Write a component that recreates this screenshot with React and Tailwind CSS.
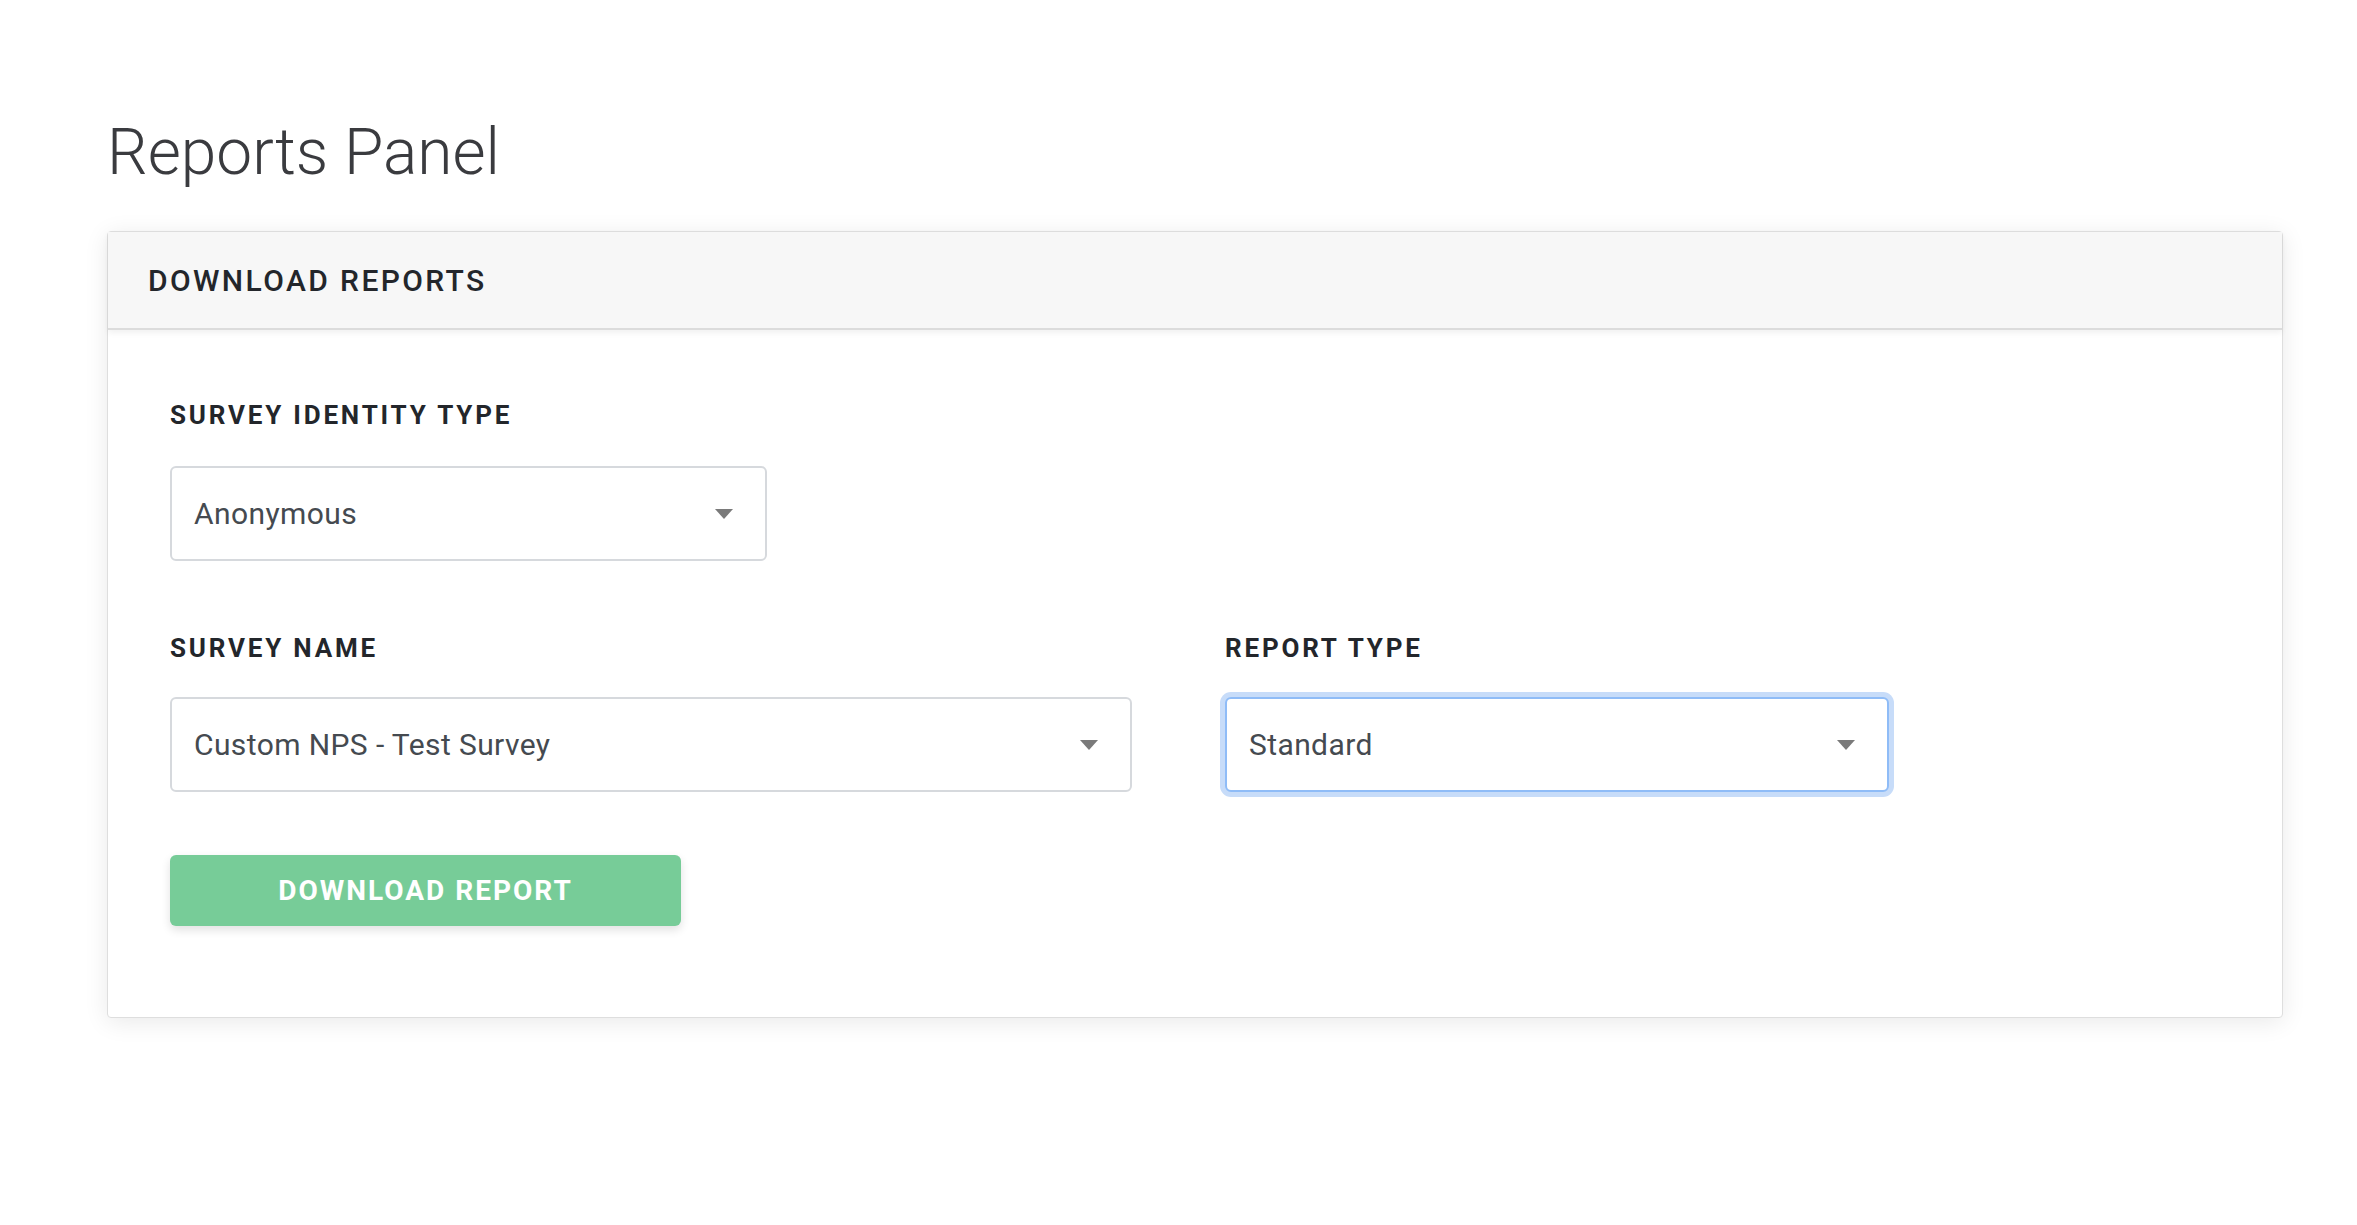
import { useState } from "react";

const font = { fontFamily: "Roboto, 'Noto Sans', sans-serif" };

function Caret() {
    return (
        <svg width="18" height="10" viewBox="0 0 18 10" className="shrink-0">
            <path d="M0 0 L18 0 L9 10 Z" fill="#7a7a7a" />
        </svg>
    );
}

function SelectBox({ value, width, focused }) {
    return (
        <div
            className={`flex h-[95px] items-center justify-between rounded-[6px] bg-white pl-[22px] pr-[32px] ${width} ${
                focused
                    ? "border-2 border-[#8fbcf7] shadow-[0_0_0_5px_#c7dcf9]"
                    : "border-2 border-[#d6d9dd]"
            }`}
        >
            <span className="text-[30px] tracking-[0.4px] text-[#454a50]">{value}</span>
            <Caret />
        </div>
    );
}

function Label({ children }) {
    return (
        <div className="h-[25px] text-[26px] font-bold uppercase leading-none tracking-[2.8px] text-[#23262b]">
            {children}
        </div>
    );
}

export default function App() {
    const [identity] = useState("Anonymous");

    return (
        <div className="min-h-screen bg-white px-[107px] pt-[121px]" style={font}>
            <h1 className="h-[66px] text-[64px] font-light leading-none text-[#3a3b3f]">Reports Panel</h1>

            {/* Card */}
            <div className="mt-[44px] w-[2176px] rounded-[4px] border border-[#dedede] bg-white shadow-[0_4px_24px_rgba(0,0,0,0.09)]">
                <div className="flex h-[98px] items-center border-b-2 border-[#dcdcdc] bg-[#f7f7f7] px-[40px] shadow-[0_3px_6px_rgba(0,0,0,0.06)]">
                    <span className="text-[30px] font-medium uppercase tracking-[2.4px] text-[#23262b]">
                        Download Reports
                    </span>
                </div>

                <div className="px-[62px] pb-[91px] pt-[72px]">
                    <Label>Survey Identity Type</Label>
                    <div className="mt-[39px]">
                        <SelectBox value={identity} width="w-[597px]" />
                    </div>

                    <div className="mt-[74px] flex gap-[93px]">
                        <div>
                            <Label>Survey Name</Label>
                            <div className="mt-[37px]">
                                <SelectBox value="Custom NPS - Test Survey" width="w-[962px]" />
                            </div>
                        </div>
                        <div>
                            <Label>Report Type</Label>
                            <div className="mt-[37px]">
                                <SelectBox value="Standard" width="w-[664px]" focused />
                            </div>
                        </div>
                    </div>

                    <button className="mt-[63px] flex h-[71px] w-[511px] items-center justify-center rounded-[6px] bg-[#77cc98] text-[28px] font-bold uppercase tracking-[2px] text-white shadow-[0_4px_10px_rgba(0,0,0,0.12)]">
                        Download Report
                    </button>
                </div>
            </div>
        </div>
    );
}
